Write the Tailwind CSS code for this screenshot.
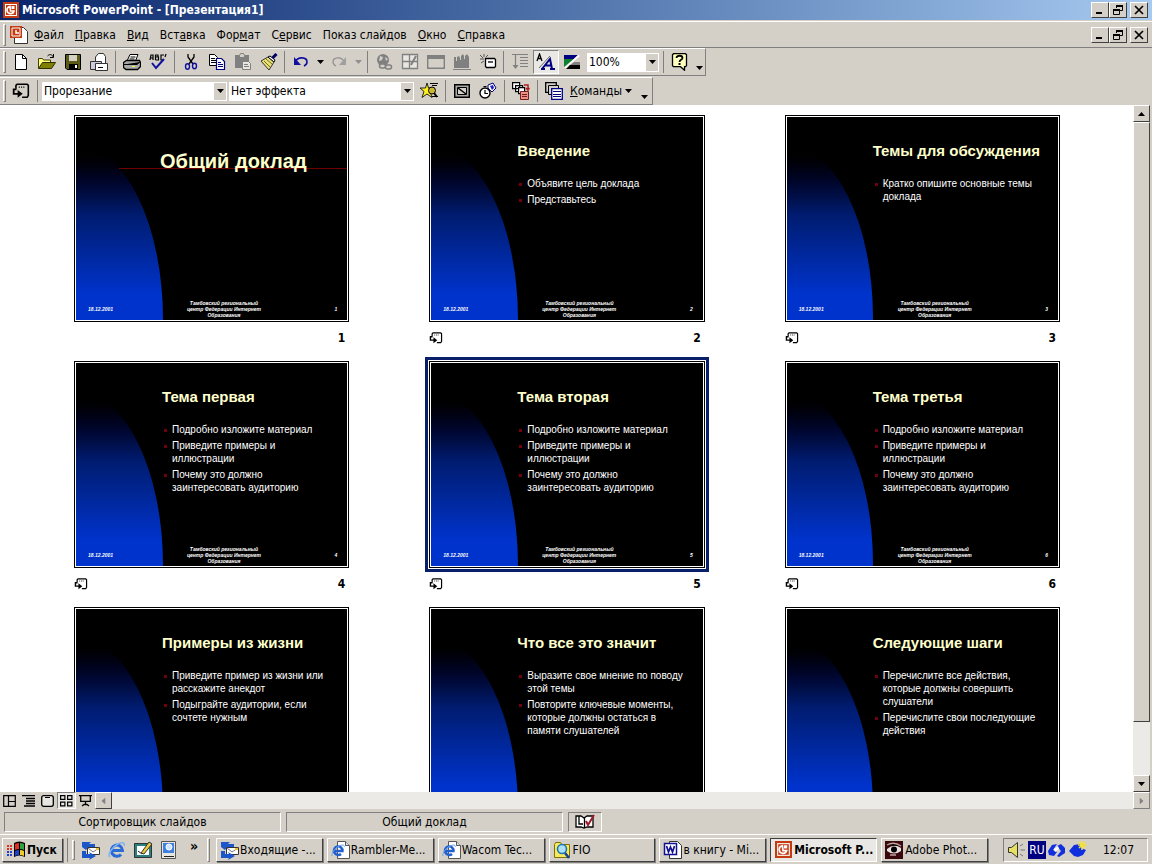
<!DOCTYPE html>
<html lang="ru">
<head>
    <title>Microsoft PowerPoint - [Презентация1]</title>
    <meta charset="UTF-8">
    <meta name="viewport" content="width=device-width, initial-scale=1.0">
    <script src="https://cdn.jsdelivr.net/npm/@tailwindcss/browser@4"></script>
</head>
<body class="bg-[#d4d0c8] text-black text-[12px] leading-4 h-screen flex flex-col overflow-hidden font-['DejaVu_Sans_Condensed','DejaVu_Sans',sans-serif]">

    <!-- Shared icons -->
    <svg class="hidden">
        <symbol id="ppt" viewBox="0 0 16 16">
            <path fill="#c43b12" d="M0 0h16v16H0z"/><path fill="#fff" d="M2 2h12v12H2z"/><path fill="#c43b12" d="M3 3h10v10H3z"/>
            <path fill="none" stroke="#fff" stroke-width="1.6" d="M7 4.5a3.6 3.6 0 1 0 4 4.500H7.500z"/><path fill="#fff" d="M8.500 4h3v3h-3z"/>
        </symbol>
        <symbol id="transition" viewBox="0 0 16 14">
            <path fill="none" stroke="#000" stroke-width="1.4" d="M3.500 5V2l1-1h9l1 1v9l-1 1.500H9"/><path fill="none" stroke="#000" stroke-dasharray="1 1" d="M6 3.500h6"/>
            <path fill="none" stroke="#000" stroke-width="1.6" d="M4 5.500H1.500v4H6"/><path d="M5 6l4.500 3.500L5 13z"/>
        </symbol>
        <symbol id="min" viewBox="0 0 12 10"><path d="M2 7h6v2H2z"/></symbol>
        <symbol id="restore" viewBox="0 0 12 10"><path fill="none" stroke="#000" d="M4.500 3V.5h6v5H8M1.500 4.500h6v5h-6z"/><path d="M4 0h7v2H4zM1 4h7v2H1z"/></symbol>
        <symbol id="close" viewBox="0 0 12 10"><path stroke="#000" stroke-width="1.7" d="M2 1l8 8M10 1L2 9"/></symbol>
        <symbol id="down" viewBox="0 0 7 4"><path d="M0 0h7L3.500 4z"/></symbol>
        <symbol id="mail" viewBox="0 0 20 20">
            <path fill="#1c56c8" d="M1 2h9l-2 2h6v5h-3V7H7l-2 3-4-3z"/><path fill="#fff" stroke="#333" d="M6.500 7.500h12v7h-12z"/><path fill="none" stroke="#777" d="M7 8l5 4 6-4"/>
            <path fill="#1c56c8" d="M1 11h4v3h4l-1-2 7 4-7 4 1-2H1z"/><path fill="#e8c030" d="M15 8h3v2h-3z"/>
        </symbol>
        <symbol id="ie" viewBox="0 0 20 20">
            <path fill="none" stroke="#2a6bd6" stroke-width="3" d="M5 10.500h10.500a5.600 5.600 0 1 0-1.500 4"/>
            <path fill="none" stroke="#7fb2f0" stroke-width="1.500" d="M3 17c-3-2 2-10 8-13 4-2 7-2 6 2"/>
        </symbol>
        <symbol id="iedoc" viewBox="0 0 20 20">
            <path fill="#fff" stroke="#555" d="M6.500 1.500h8l4 4v13h-12z"/><path fill="#ddd" stroke="#555" d="M14.500 1.500v4h4"/>
            <path fill="none" stroke="#1f5fd0" stroke-width="2.400" d="M3 11h8.500a4.300 4.300 0 1 0-1.500 3"/><path fill="none" stroke="#6aa5ee" d="M1 16C0 13 5 6 11 5c2 0 3 1 2 2"/>
        </symbol>
    </svg>

    <!-- Title bar -->
    <header class="h-5 shrink-0 flex items-center pl-[3px] pr-1 bg-linear-to-r from-[#0a246a] to-[#a6caf0]">
        <svg class="size-4"><use href="#ppt"/></svg>
        <h1 class="ml-[3px] text-white font-bold text-[12px]">Microsoft PowerPoint - [Презентация1]</h1>
        <div class="ml-auto flex">
            <button aria-label="Свернуть" class="w-[18px] h-4 grid place-items-center bg-[#d4d0c8] border border-t-white border-l-white border-r-[#404040] border-b-[#404040]"><svg class="w-3 h-2.5"><use href="#min"/></svg></button>
            <button aria-label="Восстановить" class="w-[18px] h-4 grid place-items-center bg-[#d4d0c8] border border-t-white border-l-white border-r-[#404040] border-b-[#404040]"><svg class="w-3 h-2.5"><use href="#restore"/></svg></button>
            <button aria-label="Закрыть" class="ml-[3px] w-[18px] h-4 grid place-items-center bg-[#d4d0c8] border border-t-white border-l-white border-r-[#404040] border-b-[#404040]"><svg class="w-3 h-2.5"><use href="#close"/></svg></button>
        </div>
    </header>

    <!-- Menu -->
    <nav class="h-[27px] shrink-0 flex items-center mt-px pl-[3px] pr-[3px] border-t border-t-white border-b border-b-[#808080]">
        <span class="w-[3px] h-[22px] border border-t-white border-l-white border-r-[#808080] border-b-[#808080]"></span>
        <svg class="ml-[3px] size-5" viewBox="0 0 20 20"><path fill="#fff" stroke="#333" d="M5.500 2.500h9l4 4v12h-13z"/><path fill="#c43b12" d="M1 1h12v12H1z"/><path fill="none" stroke="#fff" d="M3 3h8v8H3z"/><path fill="none" stroke="#fff" stroke-width="1.500" d="M7 5v3h3"/></svg>
        <div class="flex gap-[11px] ml-[5px]">
            <a href="#"><u>Ф</u>айл</a>
            <a href="#"><u>П</u>равка</a>
            <a href="#"><u>В</u>ид</a>
            <a href="#">Вст<u>а</u>вка</a>
            <a href="#">Фор<u>м</u>ат</a>
            <a href="#">С<u>е</u>рвис</a>
            <a href="#">Показ слай<u>д</u>ов</a>
            <a href="#"><u>О</u>кно</a>
            <a href="#"><u>С</u>правка</a>
        </div>
        <div class="ml-auto mr-px flex">
            <button aria-label="Свернуть документ" class="w-[18px] h-4 grid place-items-center border border-t-white border-l-white border-r-[#404040] border-b-[#404040]"><svg class="w-3 h-2.5"><use href="#min"/></svg></button>
            <button aria-label="Восстановить документ" class="w-[18px] h-4 grid place-items-center border border-t-white border-l-white border-r-[#404040] border-b-[#404040]"><svg class="w-3 h-2.5"><use href="#restore"/></svg></button>
            <button aria-label="Закрыть документ" class="ml-[3px] w-[18px] h-4 grid place-items-center border border-t-white border-l-white border-r-[#404040] border-b-[#404040]"><svg class="w-3 h-2.5"><use href="#close"/></svg></button>
        </div>
    </nav>

    <!-- Standard toolbar -->
    <div class="h-7 shrink-0 self-start flex items-center pl-[3px] border-t border-t-white border-r border-b border-r-[#808080] border-b-[#808080]">
        <span class="w-[3px] h-[22px] mr-0.5 border border-t-white border-l-white border-r-[#808080] border-b-[#808080]"></span>
        <button aria-label="Создать" class="w-[26px] h-6 grid place-items-center"><svg class="size-4" viewBox="0 0 16 16"><path fill="#fff" stroke="#000" d="M2.500.5h7l4 4v11h-11z"/><path fill="none" stroke="#000" d="M9.500.5v4h4"/></svg></button>
        <button aria-label="Открыть" class="w-[26px] h-6 grid place-items-center"><svg class="size-[18px]" viewBox="0 0 18 18"><path fill="#ffff80" stroke="#404000" d="M.5 15.500v-10h4l1 1.500h7v3"/><path fill="#808000" stroke="#303000" d="M.5 15.500l4-6h13l-4 6z"/><path fill="none" stroke="#000" d="M9.500 3c2-2 4-2 6 1M15.500 1v3.500H12"/></svg></button>
        <button aria-label="Сохранить" class="w-[26px] h-6 grid place-items-center"><svg class="size-4" viewBox="0 0 16 16"><path fill="#5c5c18" stroke="#000" d="M.5.5h15v15H2l-1.500-1.500z"/><path fill="#d4d0c8" d="M4 1h8v6H4z"/><path d="M4 10h9v5H4z"/><path fill="#fff" d="M10 11h2v3h-2z"/></svg></button>
        <button aria-label="Сообщение" class="w-[26px] h-6 grid place-items-center"><svg class="size-[18px]" viewBox="0 0 18 18"><path fill="#fff" stroke="#333" d="M5.500 11V4l3-3.500h5l2 3V12"/><path fill="#ccd" stroke="#333" d="M.5 8.500h11v8H.5z"/><path fill="#fff" stroke="#333" d="M5.500 10.500h12v7h-12z"/><path stroke="#000" d="M8 14.500h5"/></svg></button>
        <span class="w-px h-[22px] mx-[3px] bg-[#808080]"></span>
        <button aria-label="Печать" class="w-[26px] h-6 grid place-items-center"><svg class="size-[18px]" viewBox="0 0 18 18"><path fill="#fff" stroke="#000" d="M4 8l3-6.500h8L12.500 8"/><path stroke="#000" d="M7.500 4h5M6.500 6h5"/><path fill="#aaa" stroke="#000" stroke-width="1.300" d="M.5 9.500l3-2h13l1 2v4l-3 3H3l-2.500-2z"/><path stroke="#000" d="M1 11.500h13l3-2.500"/><path fill="#ffff40" d="M9 13h3v1H9z"/></svg></button>
        <button aria-label="Орфография" class="w-[26px] h-6 grid place-items-center"><svg class="size-[18px]" viewBox="0 0 18 18"><g fill="none" stroke="#000" stroke-width="1.200"><path d="M1 7l1-5h2v5M1.500 5H4M6.500 7V2H9v2H7h2.500v3h-3M15 2h-3v5h3M17 1l-1 3"/></g><path fill="none" stroke="#1010a0" stroke-width="2" d="M3 10l4 5 8-9"/></svg></button>
        <span class="w-px h-[22px] mx-[3px] bg-[#808080]"></span>
        <button aria-label="Вырезать" class="w-[26px] h-6 grid place-items-center"><svg class="size-4" viewBox="0 0 16 16"><path fill="none" stroke="#000" stroke-width="1.300" d="M5 0v3l5 7M11 0v3L6 10"/><g fill="none" stroke="#1010a0" stroke-width="1.400"><ellipse cx="4.500" cy="12.500" rx="2" ry="2.700"/><ellipse cx="11.500" cy="12" rx="2" ry="2.700"/></g></svg></button>
        <button aria-label="Копировать" class="w-[26px] h-6 grid place-items-center"><svg class="size-[18px]" viewBox="0 0 18 18"><path fill="#fff" stroke="#000" d="M1.500 1.500h5l3 3v8h-8z"/><path stroke="#000" d="M3 5.500h4M3 7.500h5M3 9.500h5"/><path fill="#fff" stroke="#000080" stroke-width="1.200" d="M8.500 5.500h5l3 3v8h-8z"/><path stroke="#000080" d="M10 9.500h3M10 11.500h5M10 13.500h5"/></svg></button>
        <button aria-label="Вставить" class="w-[26px] h-6 grid place-items-center"><svg class="size-[18px]" viewBox="0 0 18 18"><path fill="#808080" d="M1 2h14v13H1z"/><path fill="#d4d0c8" stroke="#808080" d="M5.500 4.500v-2l1-2h3l1 2v2z"/><path fill="#e8e6e0" stroke="#808080" d="M8.500 8.500h6l2 2v6h-8z"/><path stroke="#808080" d="M10 11.500h4M10 13.500h5"/></svg></button>
        <button aria-label="Формат по образцу" class="w-[26px] h-6 grid place-items-center"><svg class="size-[18px]" viewBox="0 0 18 18"><path fill="#e8e080" stroke="#333" d="M1 8l7-4 6 5-5 8z"/><path stroke="#777700" d="M4 8l6 6M6 6l6 5"/><path fill="#fff" stroke="#000" d="M8 4l2-1 5 4-1 2z"/><path stroke="#000060" stroke-width="3" d="M12.500 5l4-4"/></svg></button>
        <span class="w-px h-[22px] mr-[3px] ml-0.5 bg-[#808080]"></span>
        <button aria-label="Отменить" class="w-[26px] h-6 grid place-items-center"><svg class="size-4" viewBox="0 0 16 16"><path fill="none" stroke="#1010a0" stroke-width="1.600" d="M2 8c3-6 12-5 12 0 0 2-1 3-3 4"/><path fill="#1010a0" d="M1 3v8h7z"/></svg></button>
        <button aria-label="Список отмены" class="w-3 h-6 grid place-items-center"><svg class="w-[7px] h-1"><use href="#down"/></svg></button>
        <button aria-label="Вернуть" class="w-[26px] h-6 grid place-items-center"><svg class="size-4" viewBox="0 0 16 16"><path fill="none" stroke="#909090" stroke-width="1.300" d="M13 8C11 2 2 3 2 8c0 2 1 3 3 4"/><path fill="#a0a0a0" d="M15 3v8H8z"/></svg></button>
        <button aria-label="Список возврата" class="w-3 h-6 grid place-items-center"><svg class="w-[7px] h-1 fill-[#909090]"><use href="#down"/></svg></button>
        <span class="w-px h-[22px] mx-[3px] bg-[#808080]"></span>
        <button aria-label="Гиперссылка" class="w-[26px] h-6 grid place-items-center"><svg class="size-[18px]" viewBox="0 0 18 18"><circle cx="8" cy="7" r="6" fill="#808080"/><path fill="#d4d0c8" d="M5 3l3 1-1 3-3 1zM10 4l3 2-2 2z"/><g fill="#d4d0c8" stroke="#808080" stroke-width="1.500"><rect x="4.500" y="11" width="6" height="4" rx="2"/><rect x="10.500" y="12" width="6" height="4" rx="2"/></g></svg></button>
        <button aria-label="Таблицы и границы" class="w-[26px] h-6 grid place-items-center"><svg class="size-[18px]" viewBox="0 0 18 18"><path fill="#e8e6e0" stroke="#808080" stroke-width="1.300" d="M1.500 1.500h15v14h-15zM1 8.500h15M8.500 1v14"/><path fill="none" stroke="#808080" stroke-width="2" d="M15 3l-5 9"/></svg></button>
        <button aria-label="Вставить таблицу" class="w-[26px] h-6 grid place-items-center"><svg class="size-[18px]" viewBox="0 0 18 18"><path fill="none" stroke="#808080" stroke-width="1.400" d="M.7 2.700h16.600v12.600H.7z"/><path fill="#808080" d="M1 3h16v3H1z"/></svg></button>
        <button aria-label="Диаграмма" class="w-[26px] h-6 grid place-items-center"><svg class="size-[18px]" viewBox="0 0 18 18"><path fill="#808080" d="M1 4h2v4h1V4l2-1 1 2v2h1V3l2-2 1 2v3h1V3l2-2 2 3v11H1z"/><path stroke="#808080" d="M0 16.500h18"/></svg></button>
        <button aria-label="Создать слайд" class="w-[26px] h-6 grid place-items-center"><svg class="size-[18px]" viewBox="0 0 18 18"><path fill="#fff" stroke="#000" stroke-width="1.300" d="M6.500 5.500h9l1 1v7l-1 1h-8l-1-1z"/><path stroke="#000" stroke-width="1.300" d="M9 9h5"/><path stroke="#555" d="M5 1v3M1 6h4M1 2l3 3M9 2L7 4M2 10l3-2"/></svg></button>
        <span class="w-px h-[22px] mr-[3px] ml-0.5 bg-[#808080]"></span>
        <button aria-label="Развернуть все" class="w-[26px] h-6 grid place-items-center"><svg class="size-[18px]" viewBox="0 0 18 18"><path stroke="#808080" stroke-width="1.200" d="M1 1.500h16M4.500 2v13M9 4.500h8M9 7.500h8M9 10.500h8M9 13.500h8"/><path fill="#808080" d="M1.500 12h6l-3 4z"/></svg></button>
        <button aria-label="Отобразить форматирование" class="w-[26px] h-6 grid place-items-center bg-[#eae8e4] border border-t-[#808080] border-l-[#808080] border-r-white border-b-white"><svg class="w-5 h-[18px]" viewBox="0 0 20 18"><path fill="none" stroke="#000" stroke-width="1.300" d="M1 8l2.500-7L6 8M2 5.500h3"/><path stroke="#666" d="M3 15L14 3"/><path fill="none" stroke="#000080" stroke-width="2" d="M6 16l8-10 2 10M9 12.500h7M5 16h4M14 16h5"/></svg></button>
        <button aria-label="Оттенки серого" class="w-[26px] h-6 grid place-items-center"><svg class="size-4" viewBox="0 0 16 16"><path fill="#000080" d="M0 1h14l-4 4H0z"/><path fill="#108030" d="M0 5h10L0 13z"/><path fill="#fff" d="M14 1L0 14h2L16 2z"/><path fill="#808080" d="M10 8h6v4H5z"/><path d="M6 11h10v4H2z"/></svg></button>
        <div class="relative ml-0.5">
            <select aria-label="Масштаб" class="block appearance-none w-[72px] h-[19px] bg-white pl-0.5 leading-4"><option>100%</option></select>
            <span class="absolute right-px top-px w-3 h-[17px] grid place-items-center bg-[#d4d0c8] pointer-events-none"><svg class="w-[7px] h-1"><use href="#down"/></svg></span>
        </div>
        <span class="w-px h-[22px] ml-1 mr-[3px] bg-[#808080]"></span>
        <button aria-label="Справка" class="w-[26px] h-6 grid place-items-center"><svg class="size-[18px]" viewBox="0 0 18 18"><path fill="#ffffc0" stroke="#000" stroke-width="1.300" d="M2.500.7h12l1 1v11l-1 1h-1v3.500l-4-3.500h-7l-1-1v-11z"/><path fill="none" stroke="#000" stroke-width="1.800" d="M5.500 5c0-3 6-3 6 0 0 2-3 1.500-3 4"/><path d="M7.500 10h2v2h-2z"/></svg></button>
        <button aria-label="Другие кнопки" class="w-3 h-6 grid place-items-end justify-center pb-1"><svg class="w-[7px] h-1"><use href="#down"/></svg></button>
    </div>

    <!-- Slide sorter toolbar -->
    <div class="h-7 mt-px shrink-0 self-start flex items-center pl-[3px] border-t border-t-white border-r border-b border-r-[#808080] border-b-[#808080]">
        <span class="w-[3px] h-[22px] mr-0.5 border border-t-white border-l-white border-r-[#808080] border-b-[#808080]"></span>
        <button aria-label="Смена слайда" class="w-[26px] h-6 grid place-items-center"><svg class="w-[18px] h-4"><use href="#transition"/></svg></button>
        <span class="w-px h-[22px] ml-[3px] mr-1 bg-[#808080]"></span>
        <div class="relative">
            <select aria-label="Эффект перехода" class="block appearance-none w-[185px] h-[19px] bg-white pl-0.5 leading-4"><option>Прорезание</option></select>
            <span class="absolute right-px top-px w-3 h-[17px] grid place-items-center bg-[#d4d0c8] pointer-events-none"><svg class="w-[7px] h-1"><use href="#down"/></svg></span>
        </div>
        <div class="relative ml-0.5">
            <select aria-label="Эффект построения" class="block appearance-none w-[185px] h-[19px] bg-white pl-0.5 leading-4"><option>Нет эффекта</option></select>
            <span class="absolute right-px top-px w-3 h-[17px] grid place-items-center bg-[#d4d0c8] pointer-events-none"><svg class="w-[7px] h-1"><use href="#down"/></svg></span>
        </div>
        <button aria-label="Просмотр анимации" class="ml-0.5 w-[26px] h-6 grid place-items-center"><svg class="size-[18px]" viewBox="0 0 18 18"><path stroke="#000" d="M10 1.500h8M12 3.500h5M11 14.500h7"/><path fill="#ffee20" stroke="#222" d="M7 1l1.500 5H14l-4 3.500 2 6-5-3.500-5 3.500 2-6L0 6h5.500z"/><circle cx="12" cy="8.500" r="3.500" fill="#c8b830" stroke="#000"/><path stroke="#000" stroke-width="2" d="M14 11l3 4"/></svg></button>
        <span class="w-px h-[22px] mx-[3px] bg-[#808080]"></span>
        <button aria-label="Скрыть слайд" class="w-[26px] h-6 grid place-items-center"><svg class="size-4" viewBox="0 0 16 16"><path fill="#aaa" stroke="#000" stroke-width="1.500" d="M.7 1.700h14.600v12.600H.7z"/><path fill="#d4d0c8" stroke="#000" d="M3.500 4.500h9v7h-9z"/><path stroke="#000" stroke-width="1.500" d="M4 5l8 6"/></svg></button>
        <button aria-label="Настройка времени" class="w-[26px] h-6 grid place-items-center"><svg class="size-[18px]" viewBox="0 0 18 18"><circle cx="6" cy="11" r="5" fill="#fff" stroke="#000" stroke-width="1.400"/><path fill="none" stroke="#000" stroke-width="1.200" d="M6 8v3.500h3M4.500 4.500h3"/><path fill="#fff" stroke="#000080" d="M9 3l5-2 3 5-4 4-4-4z"/><path fill="#2020c0" d="M11 4l3-1 1 3-2 2z"/></svg></button>
        <span class="w-px h-[22px] mx-[3px] bg-[#808080]"></span>
        <button aria-label="Итоговый слайд" class="w-[26px] h-6 grid place-items-center"><svg class="size-[18px]" viewBox="0 0 18 18"><path fill="#fff" stroke="#000" stroke-width="1.200" d="M.6.6h7v6h-7zM3.600 3.600h7v6h-7z"/><path fill="#fff" stroke="#000" stroke-width="1.200" d="M6.600 5.600h6v6h-6z"/><path fill="#f09080" stroke="#702020" d="M8.500 9.500h8v8h-8z"/><path fill="none" stroke="#b02020" stroke-width="1.500" d="M12 3h4v4M14 6l2 2 1.500-2"/><path stroke="#702020" d="M10 12.500h5M10 14.500h5"/></svg></button>
        <span class="w-px h-[22px] mx-[3px] bg-[#808080]"></span>
        <button class="h-6 flex items-center gap-[7px] pl-1"><svg class="size-[18px]" viewBox="0 0 18 18"><path fill="#d4d0c8" stroke="#000" stroke-width="1.300" d="M.7.7h10.600v9.600H.7z"/><path fill="#d4d0c8" stroke="#000" d="M3.500 3.500h10v9h-10z"/><path fill="#fff" stroke="#000080" stroke-width="1.300" d="M6.700 6.700h10.600v10.600H6.700z"/><path stroke="#000080" d="M8 9.500h8M8 12.500h8M8 14.500h8"/></svg><span><u>К</u>оманды</span><svg class="-ml-1 w-[7px] h-1"><use href="#down"/></svg></button>
        <button aria-label="Другие команды" class="ml-1 w-4 h-6 grid place-items-end justify-center pb-1"><svg class="w-[7px] h-1"><use href="#down"/></svg></button>
    </div>

    <!-- Slide sorter -->
    <div class="flex-1 min-h-0 flex pr-0.5">
        <main id="slides" class="flex-1 min-w-0 overflow-hidden bg-white grid grid-cols-3 content-start gap-x-20 pl-[74px] pr-[73px] pt-[10px]"></main>
        <div class="w-[17px] flex flex-col bg-[#eceae6]">
            <button aria-label="Вверх" class="h-[17px] grid place-items-center bg-[#d4d0c8] border border-t-white border-l-white border-r-[#404040] border-b-[#404040]"><svg class="w-[7px] h-1 rotate-180"><use href="#down"/></svg></button>
            <div class="h-[600px] bg-[#d4d0c8] border border-t-white border-l-white border-r-[#404040] border-b-[#404040]"></div>
            <button aria-label="Вниз" class="mt-auto h-[17px] grid place-items-center bg-[#d4d0c8] border border-t-white border-l-white border-r-[#404040] border-b-[#404040]"><svg class="w-[7px] h-1"><use href="#down"/></svg></button>
        </div>
    </div>

    <!-- View buttons and horizontal scroll bar -->
    <div class="h-[17px] shrink-0 flex pr-0.5">
        <button aria-label="Обычный режим" class="w-[19px] grid place-items-center"><svg class="w-[13px] h-3" viewBox="0 0 13 12"><path fill="none" stroke="#000" stroke-width="1.200" d="M.7.7h11.600v10.600H.7zM5.500 1v10M6 6.500h6"/></svg></button>
        <button aria-label="Режим структуры" class="w-[19px] grid place-items-center"><svg class="w-[13px] h-3" viewBox="0 0 13 12"><path stroke="#000" stroke-width="1.300" d="M0 .7h13M4 3.500h9M4 6h9M4 8.500h9M2 11h11"/></svg></button>
        <button aria-label="Режим слайдов" class="w-[19px] grid place-items-center"><svg class="w-[13px] h-3" viewBox="0 0 13 12"><rect x=".7" y=".7" width="11.600" height="10.600" rx="2" fill="#e8e6e0" stroke="#000" stroke-width="1.300"/><path stroke="#000" d="M4 2.500h5"/></svg></button>
        <button aria-label="Режим сортировщика" class="w-[19px] grid place-items-center bg-[#eae8e4] border border-t-[#808080] border-l-[#808080] border-r-white border-b-white"><svg class="w-[13px] h-3" viewBox="0 0 13 12"><path fill="none" stroke="#000" stroke-width="1.200" d="M.6.6h4.300v3.800H.6zM7.600.6h4.300v3.800H7.600zM.6 7.100h4.300v3.800H.6zM7.600 7.100h4.300v3.800H7.600z"/></svg></button>
        <button aria-label="Показ слайдов" class="w-[19px] grid place-items-center"><svg class="w-[13px] h-3" viewBox="0 0 13 12"><path fill="none" stroke="#000" stroke-width="1.300" d="M0 .7h13M1.700 1v5.300h9.600V1M6.500 6v4M3 11l2-1.500h3L10 11"/></svg></button>
        <button aria-label="Влево" class="w-[17px] grid place-items-center border border-t-white border-l-white border-r-[#404040] border-b-[#404040]"><svg class="w-[7px] h-1 rotate-90 fill-[#808080]"><use href="#down"/></svg></button>
        <div class="flex-1 bg-[#eceae6]"></div>
        <button aria-label="Вправо" class="w-[17px] grid place-items-center border border-t-white border-l-white border-r-[#808080] border-b-[#808080]"><svg class="w-[7px] h-1 -rotate-90 fill-[#808080]"><use href="#down"/></svg></button>
    </div>

    <!-- Status bar -->
    <div class="h-[25px] shrink-0 flex items-center gap-[5px] pl-1">
        <div class="w-[277px] h-5 text-center border border-t-[#808080] border-l-[#808080] border-r-white border-b-white leading-[18px]">Сортировщик слайдов</div>
        <div class="w-[277px] h-5 text-center border border-t-[#808080] border-l-[#808080] border-r-white border-b-white leading-[18px]">Общий доклад</div>
        <div class="w-[34px] h-5 grid place-items-center border border-t-[#808080] border-l-[#808080] border-r-white border-b-white"><svg class="w-5 h-4" viewBox="0 0 20 16"><path fill="#fff" stroke="#000" stroke-width="1.300" d="M1 2h5l3 2 3-2h6v11h-6l-3 1-3-1H1z"/><path fill="none" stroke="#000" stroke-width="1.300" d="M9.500 4v10M4 2v8h4"/><path fill="none" stroke="#a01828" stroke-width="2" d="M11 7l2 4 6-10"/></svg></div>
    </div>

    <!-- Taskbar -->
    <footer class="h-[30px] shrink-0 flex items-center border-t border-t-white pl-0.5 pr-1">
        <button class="w-[61px] h-6 flex items-center gap-px pl-[3px] font-bold border border-t-white border-l-white border-r-[#404040] border-b-[#404040] shadow-[1px_1px_0_#808080]"><svg class="size-5 shrink-0" viewBox="0 0 20 20"><path d="M8 3q5-3 11 0v14q-6-3-11 0z"/><path fill="#e03020" d="M9 4q2-1 4-1v6q-2 0-4 1z"/><path fill="#30a040" d="M14 3q2 0 4 1v6q-2-1-4-1z"/><path fill="#2040d0" d="M9 11q2-1 4-1v5q-2 0-4 1z"/><path fill="#f0d020" d="M14 10q2 0 4 1v5q-2-1-4-1z"/><path stroke="#e03020" stroke-width="2" stroke-dasharray="2 1" d="M1 6h6M1 9h6"/><path stroke="#2040d0" stroke-width="2" stroke-dasharray="2 1" d="M1 12h6M1 15h6"/></svg>Пуск</button>
        <span class="w-px h-6 ml-1 bg-[#808080]"></span><span class="w-[3px] h-5 ml-1 border border-t-white border-l-white border-r-[#808080] border-b-[#808080]"></span>
        <div class="flex gap-1.5 ml-1.5">
            <a href="#" aria-label="Почта"><svg class="size-5"><use href="#mail"/></svg></a>
            <a href="#" aria-label="Internet Explorer"><svg class="size-5"><use href="#ie"/></svg></a>
            <a href="#" aria-label="Рабочий стол"><svg class="size-5" viewBox="0 0 20 20"><path fill="#2a8080" stroke="#333" d="M1.500 3.500h17v14h-17z"/><path fill="#fff" d="M4 6h12v9H4z"/><path fill="none" stroke="#222" d="M5 11l4 3 8-12"/><path fill="#e8c840" stroke="#333" d="M8 13l8-11 3 2-8 10z"/></svg></a>
            <a href="#" aria-label="Поиск"><svg class="size-5" viewBox="0 0 20 20"><path fill="#e8e8e0" stroke="#555" d="M2.500 1.500h14v17h-14z"/><path fill="#4080e0" d="M4 3h11v10H4z"/><circle cx="10" cy="7" r="3" fill="#cfe4ff" stroke="#fff"/><path stroke="#222" d="M5 16.500h10"/></svg></a>
        </div>
        <button aria-label="Ещё" class="w-[18px] ml-1.5 pb-2 text-[14px] font-bold leading-4">»</button>
        <span class="w-[3px] h-6 ml-1 mr-[6px] border border-t-white border-l-white border-r-[#808080] border-b-[#808080]"></span>
        <div class="flex-1 min-w-0 grid grid-cols-7 gap-1">
            <button class="h-6 flex items-center pl-[3px] whitespace-nowrap border border-t-white border-l-white border-r-[#404040] border-b-[#404040] shadow-[1px_1px_0_#808080]"><svg class="size-5 shrink-0"><use href="#mail"/></svg>Входящие -...</button>
            <button class="h-6 flex items-center pl-[3px] whitespace-nowrap border border-t-white border-l-white border-r-[#404040] border-b-[#404040] shadow-[1px_1px_0_#808080]"><svg class="size-5 shrink-0"><use href="#iedoc"/></svg>Rambler-Me...</button>
            <button class="h-6 flex items-center pl-[3px] whitespace-nowrap border border-t-white border-l-white border-r-[#404040] border-b-[#404040] shadow-[1px_1px_0_#808080]"><svg class="size-5 shrink-0"><use href="#iedoc"/></svg>Wacom Tec...</button>
            <button class="h-6 flex items-center pl-[3px] whitespace-nowrap border border-t-white border-l-white border-r-[#404040] border-b-[#404040] shadow-[1px_1px_0_#808080]"><svg class="size-5 shrink-0" viewBox="0 0 20 20"><path fill="#f8e860" stroke="#807000" d="M1.500 4.500l1-2h5l1 2h8v13h-15z"/><circle cx="9" cy="9" r="4.500" fill="#b0e0f8" stroke="#1878b0" stroke-width="1.600"/><path stroke="#1040a0" stroke-width="2.500" d="M12 13l4 5"/></svg>FIO</button>
            <button class="h-6 flex items-center pl-[3px] whitespace-nowrap border border-t-white border-l-white border-r-[#404040] border-b-[#404040] shadow-[1px_1px_0_#808080]"><svg class="size-5 shrink-0" viewBox="0 0 20 20"><path fill="#fff" stroke="#333" d="M6.500 1.500h8l4 4v13h-12z"/><path fill="#fff" stroke="#101090" stroke-width="1.500" d="M1.500 3.500h12v11h-12z"/><path fill="none" stroke="#101090" stroke-width="1.700" d="M3.500 6l2 6 2-5 2 5 2-6"/></svg>в книгу - Mi...</button>
            <button class="h-6 flex items-center gap-0.5 pl-1 whitespace-nowrap font-bold bg-[#eae8e4] border border-t-[#404040] border-l-[#404040] border-r-white border-b-white"><svg class="size-[17px] shrink-0"><use href="#ppt"/></svg>Microsoft P...</button>
            <button class="h-6 flex items-center gap-0.5 pl-[3px] whitespace-nowrap border border-t-white border-l-white border-r-[#404040] border-b-[#404040] shadow-[1px_1px_0_#808080]"><svg class="size-[18px] shrink-0" viewBox="0 0 18 18"><path fill="#38080c" d="M0 0h18v18H0z"/><path fill="#e8e0e0" d="M2 8q7-6 14-1v3q-7 5-14 0z"/><circle cx="9" cy="8.500" r="3"/><path stroke="#c8a0a0" stroke-width="1.300" d="M2 4q7-4 14 1M5 14h6"/></svg>Adobe Phot...</button>
        </div>
        <div class="w-[145px] h-6 ml-[15px] flex items-center pl-1 border border-t-[#808080] border-l-[#808080] border-r-white border-b-white">
            <svg class="size-[18px]" viewBox="0 0 18 18"><path fill="#e8e060" stroke="#333" d="M.5 6.500h3l6-5v15l-6-5h-3z"/><path fill="none" stroke="#777" d="M12 5l3-2M12.500 9H17M12 13l3 2"/></svg>
            <span class="w-[18px] h-[18px] ml-0.5 bg-[#000080] text-white text-center leading-[18px]">RU</span>
            <svg class="size-[18px] ml-0.5" viewBox="0 0 18 18"><path fill="#1030e0" d="M0 10l4-6 5-1-4 6 4 2-3 4-5-1zM9 5l4-2 4 4v5l-6 4-2-1 4-5z"/><path fill="#fff" d="M6 8l4-3 1 3-4 3z"/></svg>
            <svg class="size-5 ml-0.5" viewBox="0 0 20 20"><path fill="#1030e0" d="M1 11l5-6 6-1 1 4 5 2-3 5-5 2-4-1z"/><path stroke="#f0e040" stroke-width="1.500" d="M14 1v9M10 5h9M11 2l6 6M17 2l-6 6"/></svg>
            <time class="ml-auto mr-[13px]">12:07</time>
        </div>
    </footer>

    <script>
        const slides = [
            { title: 'Общий доклад', cover: true, footer: true },
            { title: 'Введение', footer: true, items: ['Объявите цель доклада', 'Представьтесь'] },
            { title: 'Темы для обсуждения', footer: true, items: ['Кратко опишите основные темы<br>доклада'] },
            { title: 'Тема первая', footer: true, items: ['Подробно изложите материал', 'Приведите примеры и<br>иллюстрации', 'Почему это должно<br>заинтересовать аудиторию'] },
            { title: 'Тема вторая', footer: true, selected: true, items: ['Подробно изложите материал', 'Приведите примеры и<br>иллюстрации', 'Почему это должно<br>заинтересовать аудиторию'] },
            { title: 'Тема третья', footer: true, items: ['Подробно изложите материал', 'Приведите примеры и<br>иллюстрации', 'Почему это должно<br>заинтересовать аудиторию'] },
            { title: 'Примеры из жизни', items: ['Приведите пример из жизни или<br>расскажите анекдот', 'Подыграйте аудитории, если<br>сочтете нужным'] },
            { title: 'Что все это значит', items: ['Выразите свое мнение по поводу<br>этой темы', 'Повторите ключевые моменты,<br>которые должны остаться в<br>памяти слушателей'] },
            { title: 'Следующие шаги', items: ['Перечислите все действия,<br>которые должны совершить<br>слушатели', 'Перечислите свои последующие<br>действия'] }
        ];

        function slideBody(slide) {
            if (slide.cover) {
                return `
                    <div class="absolute left-[16%] right-0 top-[51px] h-px bg-[#700000]"></div>
                    <h2 class="relative pt-[30px] pl-[84px] text-[20px] leading-7 font-bold text-[#ffffcc]">${slide.title}</h2>`;
            }
            const items = slide.items.map(item => `
                <li class="relative pl-[10px] mb-[3px]"><span class="absolute left-[2px] top-[6px] size-[3px] bg-[#700010]"></span>${item}</li>`).join('');
            return `
                <h2 class="relative pt-6 pl-[86px] text-[15px] leading-5 font-bold text-[#ffffcc]">${slide.title}</h2>
                <ul class="relative mt-4 pl-[86px] text-[10px] leading-[13px] whitespace-nowrap">${items}</ul>`;
        }

        function slideFooter(number) {
            return `
                <div class="relative mt-auto flex items-center pl-3 pr-[10px] pb-0.5 text-[5px] leading-[6px] font-bold italic">
                    <span class="w-[90px]">18.12.2001</span>
                    <span class="w-[92px] text-center whitespace-nowrap">Тамбовский региональный<br>центр Федерации Интернет<br>Образования</span>
                    <span class="ml-auto">${number}</span>
                </div>`;
        }

        document.getElementById('slides').innerHTML = slides.map((slide, i) => `
            <section class="${i < 6 ? 'h-[246px]' : 'h-[207px]'}">
                <div class="h-[207px] p-px bg-white border border-black ${slide.selected ? 'outline-3 outline-offset-1 outline-[#0a1f6a]' : ''}">
                    <div class="relative h-full flex flex-col overflow-hidden bg-black text-white font-['Liberation_Sans',sans-serif]">
                        <div class="absolute left-0 bottom-0 w-[32%] h-[86%] rounded-tr-[100%] bg-linear-to-b from-black via-[#001c70] via-40% to-[#0033cc] to-85%"></div>
                        ${slideBody(slide)}
                        ${slide.footer ? slideFooter(i + 1) : ''}
                    </div>
                </div>
                ${i < 6 ? `
                <div class="h-8 flex items-center justify-between pr-1 font-bold">
                    <span>${slide.cover ? '' : '<svg class="w-3.5 h-3"><use href="#transition"/></svg>'}</span>
                    <span>${i + 1}</span>
                </div>` : ''}
            </section>`).join('');
    </script>
</body>
</html>
